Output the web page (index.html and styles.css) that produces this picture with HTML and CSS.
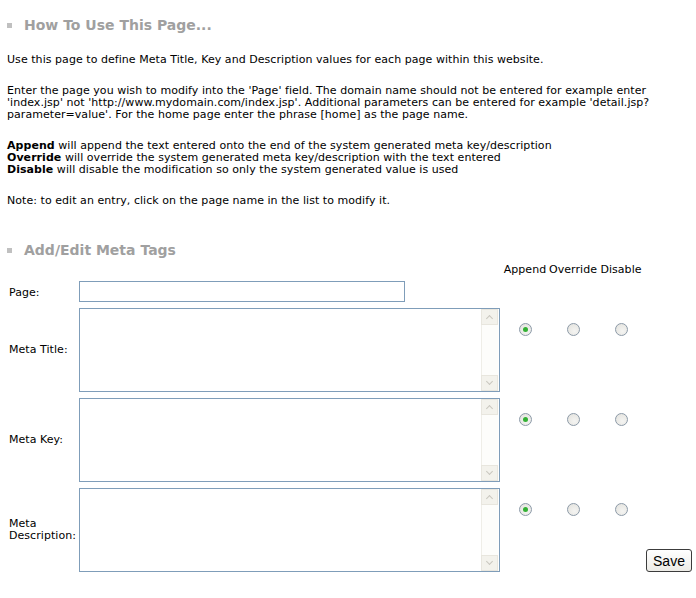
FILE: index.html
```html
<!DOCTYPE html>
<html>
<head>
<meta charset="utf-8">
<link rel="stylesheet" href="styles.css">
</head>
<body>
<div class="page">
  <h2 class="section-title"><span class="bullet"></span>How To Use This Page...</h2>
  <p class="txt">Use this page to define Meta Title, Key and Description values for each page within this website.</p>
  <p class="txt">Enter the page you wish to modify into the 'Page' field. The domain name should not be entered for example enter<br>'index.jsp' not 'http://www.mydomain.com/index.jsp'. Additional parameters can be entered for example 'detail.jsp?<br>parameter=value'. For the home page enter the phrase [home] as the page name.</p>
  <p class="txt"><b>Append</b> will append the text entered onto the end of the system generated meta key/description<br><b>Override</b> will override the system generated meta key/description with the text entered<br><b>Disable</b> will disable the modification so only the system generated value is used</p>
  <p class="txt">Note: to edit an entry, click on the page name in the list to modify it.</p>

  <h2 class="section-title second"><span class="bullet"></span>Add/Edit Meta Tags</h2>

  <form class="form">
    <div class="hdr-spacer"></div>
    <div class="hdr">Append</div>
    <div class="hdr">Override</div>
    <div class="hdr">Disable</div>
    <div class="cell-empty"></div>

    <label class="lbl row-page">Page:</label>
    <div class="field row-page"><input class="input" type="text"></div>
    <div class="rest row-page"></div>

    <label class="lbl">Meta Title:</label>
    <div class="field"><div class="ta"><textarea></textarea><div class="sb"><span class="sb-btn up"></span><span class="sb-track"></span><span class="sb-btn down"></span></div></div></div>
    <div class="rc"><input type="radio" name="t" checked></div>
    <div class="rc"><input type="radio" name="t"></div>
    <div class="rc"><input type="radio" name="t"></div>
    <div class="cell-empty"></div>

    <label class="lbl">Meta Key:</label>
    <div class="field"><div class="ta"><textarea></textarea><div class="sb"><span class="sb-btn up"></span><span class="sb-track"></span><span class="sb-btn down"></span></div></div></div>
    <div class="rc"><input type="radio" name="k" checked></div>
    <div class="rc"><input type="radio" name="k"></div>
    <div class="rc"><input type="radio" name="k"></div>
    <div class="cell-empty"></div>

    <label class="lbl">Meta<br>Description:</label>
    <div class="field"><div class="ta"><textarea></textarea><div class="sb"><span class="sb-btn up"></span><span class="sb-track"></span><span class="sb-btn down"></span></div></div></div>
    <div class="rc"><input type="radio" name="d" checked></div>
    <div class="rc"><input type="radio" name="d"></div>
    <div class="rc"><input type="radio" name="d"></div>
    <div class="btn-cell"><button type="button" class="save">Save</button></div>
  </form>
</div>
</body>
</html>
```
FILE: styles.css
```css
html, body {
  margin: 0;
  padding: 0;
  background: #fff;
}
.page {
  font-family: "DejaVu Sans", Verdana, sans-serif;
  font-size: 11px;
  letter-spacing: 0.05px;
  color: #000;
  padding-top: 16px;
}
.section-title {
  display: flex;
  align-items: center;
  margin: 0;
  height: 18px;
  font-size: 14px;
  line-height: 18px;
  font-weight: bold;
  letter-spacing: 0;
  color: #a0a0a0;
  padding-left: 7px;
}
.section-title.second {
  margin-top: 34px;
}
.bullet {
  width: 5px;
  height: 5px;
  background: #c0c0c0;
  margin-right: 12px;
}
.txt {
  margin: 20px 0 0 7px;
  line-height: 12px;
}
.txt + .txt {
  margin-top: 19px;
}
.form {
  display: grid;
  grid-template-columns: 70px 422px 48px 48px 48px 1fr;
  row-gap: 6px;
  padding-left: 9px;
  margin-top: 5px;
}
.hdr-spacer {
  grid-column: 1 / 3;
}
.hdr {
  text-align: center;
  line-height: 12px;
  margin-bottom: -1px;
  white-space: nowrap;
}
.lbl {
  display: flex;
  align-items: center;
  line-height: 12px;
}
.lbl.row-page {
  padding-top: 2px;
}
.rest {
  grid-column: 3 / 7;
}
.input {
  display: block;
  box-sizing: border-box;
  width: 326px;
  height: 21px;
  margin: 0;
  border: 1px solid #7f9db9;
  padding: 0;
}
.ta {
  display: flex;
  box-sizing: border-box;
  width: 421px;
  height: 84px;
  border: 1px solid #7f9db9;
  background: #fff;
}
.ta textarea {
  flex: 1;
  border: 0;
  margin: 0;
  padding: 0;
  resize: none;
  outline: none;
  overflow: hidden;
}
.sb {
  width: 17px;
  display: flex;
  flex-direction: column;
  background: #fdfdfb;
  margin-right: 1px;
}
.sb-btn {
  height: 16px;
  box-sizing: border-box;
  border: 1px solid #e8e6de;
  background: #f3f2ec;
  position: relative;
}
.sb-btn::after {
  content: "";
  position: absolute;
  left: 5px;
  width: 4px;
  height: 4px;
  border-left: 1px solid #c9c7bf;
  border-top: 1px solid #c9c7bf;
}
.sb-btn.up::after {
  top: 6px;
  transform: rotate(45deg);
}
.sb-btn.down::after {
  top: 3px;
  transform: rotate(225deg);
}
.sb-track {
  flex: 1;
  border-left: 1px solid #efeee8;
}
.rc {
  display: flex;
  justify-content: center;
  align-items: flex-start;
  padding-top: 15px;
}
.rc input {
  appearance: none;
  -webkit-appearance: none;
  width: 13px;
  height: 13px;
  margin: 0;
  border: 1px solid #8c9aa8;
  border-radius: 50%;
  background: radial-gradient(circle at 60% 65%, #f4f4f2 0%, #e2e1dc 100%);
  box-sizing: border-box;
  display: grid;
  place-content: center;
}
.rc input:checked::before {
  content: "";
  width: 5px;
  height: 5px;
  border-radius: 50%;
  background: #33b033;
}
.btn-cell {
  display: flex;
  justify-content: flex-end;
  align-items: flex-end;
  padding-right: 4px;
}
.save {
  font-family: "Liberation Sans", Arial, sans-serif;
  font-size: 14px;
  letter-spacing: 0;
  height: 23px;
  width: 46px;
  padding: 0;
  border: 1px solid #3c3c3c;
  border-radius: 3px;
  background: linear-gradient(#ffffff, #ecebe6);
  color: #000;
}
```
